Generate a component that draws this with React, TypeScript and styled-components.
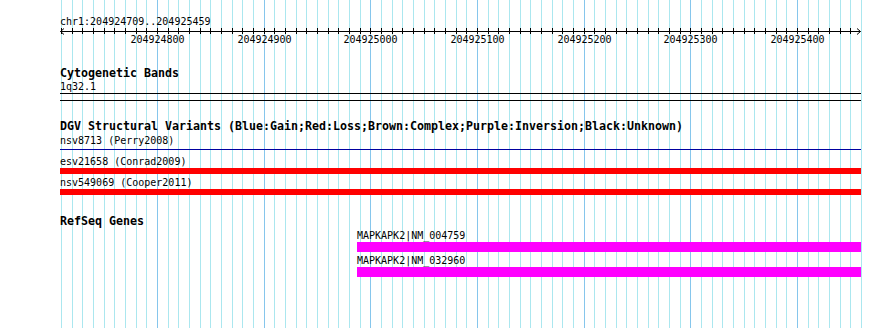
import React from "react";
import styled, { createGlobalStyle } from "styled-components";

const START = 204924709;
const END = 204925459;
const LEFT = 60;
const PANEL_W = 801;
const PX = PANEL_W / (END - START + 1);
const xOf = (bp: number) => Math.round((bp - START) * PX);

const gridStops: number[] = [];
for (let bp = 204924710; bp <= 204925460; bp += 10) gridStops.push(bp);
const majorStops = gridStops.filter((bp) => bp % 100 === 0 && bp <= END);

const GlobalStyle = createGlobalStyle`
  html, body { margin: 0; padding: 0; background: #ffffff; }
  body { width: 890px; height: 328px; overflow: hidden; }
`;

const Page = styled.div`
  position: relative;
  width: 890px;
  height: 328px;
  overflow: hidden;
  background: #ffffff;
  color: #000000;
  font-family: "DejaVu Sans Mono", "Liberation Mono", monospace;
`;

const GridLayer = styled.svg`
  position: absolute;
  left: 0;
  top: 0;
  display: block;
`;

const Panel = styled.div`
  position: relative;
  margin-left: ${LEFT}px;
  width: ${PANEL_W}px;
  display: flex;
  flex-direction: column;
`;

const SmallText = styled.div`
  font-size: 10px;
  line-height: 13px;
  height: 13px;
  white-space: nowrap;
`;

const Ruler = styled.section`
  display: flex;
  flex-direction: column;
  padding-top: 15px;
`;

const Axis = styled.svg`
  display: block;
  overflow: visible;
`;

const TickLabels = styled.div`
  position: relative;
  height: 13px;
  margin-top: -1px;
`;

const TickLabel = styled.span`
  position: absolute;
  top: 0;
  transform: translateX(-50%);
  font-size: 10px;
  line-height: 13px;
  white-space: nowrap;
`;

const Track = styled.section<{ $gap: number }>`
  display: flex;
  flex-direction: column;
  margin-top: ${(p) => p.$gap}px;
`;

const TrackTitle = styled.h3<{ $after: number }>`
  margin: 0 0 ${(p) => p.$after}px;
  font-size: 11.63px;
  font-weight: bold;
  line-height: 13px;
  height: 13px;
  white-space: nowrap;
`;

const Rows = styled.div`
  display: flex;
  flex-direction: column;
  gap: 2px;
`;

const Feature = styled.div`
  display: flex;
  flex-direction: column;
  align-items: stretch;
`;

const Band = styled.div`
  height: 6px;
  border-top: 1px solid #000000;
  border-bottom: 1px solid #000000;
`;

const Bar = styled.div<{ $color: string; $height: number }>`
  height: ${(p) => p.$height}px;
  background: ${(p) => p.$color};
`;

const Connector = styled.div`
  height: 1px;
  margin: 2px 0 3px;
  background: #0000a0;
`;

type Variant = { label: string; kind: "line" | "loss" };
const variants: Variant[] = [
  { label: "nsv8713 (Perry2008)", kind: "line" },
  { label: "esv21658 (Conrad2009)", kind: "loss" },
  { label: "nsv549069 (Cooper2011)", kind: "loss" },
];

type Gene = { label: string; start: number };
const genes: Gene[] = [
  { label: "MAPKAPK2|NM_004759", start: 204924987 },
  { label: "MAPKAPK2|NM_032960", start: 204924987 },
];

export default function App() {
  const axisY = 3.5;
  return (
    <Page>
      <GlobalStyle />
      <GridLayer width={890} height={328}>
        {gridStops.map((bp) => {
          const x = LEFT + xOf(bp) + 0.5;
          const major = bp % 100 === 0;
          return (
            <line
              key={bp}
              x1={x}
              x2={x}
              y1={0}
              y2={328}
              stroke={major ? "#86c6ec" : "#abe7ef"}
              strokeWidth={1}
            />
          );
        })}
      </GridLayer>
      <Panel>
        <Ruler>
          <SmallText>chr1:204924709..204925459</SmallText>
          <Axis width={PANEL_W} height={6}>
            <line x1={0.5} x2={PANEL_W - 0.5} y1={axisY} y2={axisY} stroke="#000" strokeWidth={1} />
            {gridStops
              .filter((bp) => bp <= 204925450)
              .map((bp) => {
                const x = xOf(bp) + 0.5;
                return <line key={bp} x1={x} x2={x} y1={0} y2={6} stroke="#000" strokeWidth={1} />;
              })}
            <polyline points={`4,0.5 0.5,${axisY} 4,6.5`} fill="none" stroke="#000" strokeWidth={1} />
            <polyline
              points={`${PANEL_W - 4},0.5 ${PANEL_W - 0.5},${axisY} ${PANEL_W - 4},6.5`}
              fill="none"
              stroke="#000"
              strokeWidth={1}
            />
          </Axis>
          <TickLabels>
            {majorStops.map((bp) => (
              <TickLabel key={bp} style={{ left: xOf(bp) + 0.5 }}>
                {bp}
              </TickLabel>
            ))}
          </TickLabels>
        </Ruler>

        <Track $gap={21}>
          <TrackTitle $after={0}>Cytogenetic Bands</TrackTitle>
          <Feature>
            <SmallText>1q32.1</SmallText>
            <Band />
          </Feature>
        </Track>

        <Track $gap={19}>
          <TrackTitle $after={1}>
            DGV Structural Variants (Blue:Gain;Red:Loss;Brown:Complex;Purple:Inversion;Black:Unknown)
          </TrackTitle>
          <Rows>
            {variants.map((v) => (
              <Feature key={v.label}>
                <SmallText>{v.label}</SmallText>
                {v.kind === "line" ? <Connector /> : <Bar $color="#ff0000" $height={6} />}
              </Feature>
            ))}
          </Rows>
        </Track>

        <Track $gap={20}>
          <TrackTitle $after={1}>RefSeq Genes</TrackTitle>
          <Rows>
            {genes.map((g) => (
              <Feature key={g.label} style={{ marginLeft: xOf(g.start) }}>
                <SmallText>{g.label}</SmallText>
                <Bar $color="#ff00ff" $height={10} />
              </Feature>
            ))}
          </Rows>
        </Track>
      </Panel>
    </Page>
  );
}
